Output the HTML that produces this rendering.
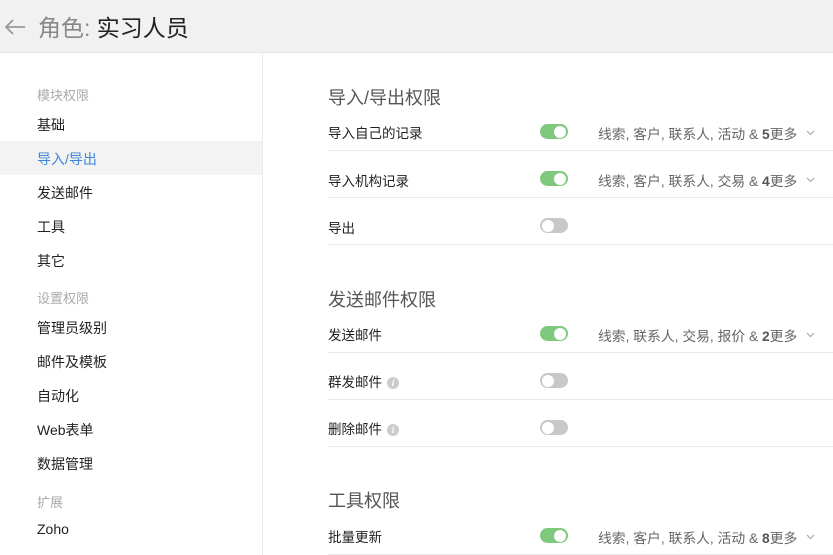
<!DOCTYPE html>
<html><head><meta charset="utf-8"><style>
*{margin:0;padding:0;box-sizing:border-box}
body{width:833px;height:555px;overflow:hidden;background:#fff;font-family:"Liberation Sans","Noto Sans CJK SC",sans-serif;color:#222;position:relative}
.hdr{position:absolute;left:0;top:0;width:833px;height:53px;background:#f1f1f1;border-bottom:1px solid #e6e6e6}
.hdr .t{position:absolute;left:38px;top:9px;font-size:23px;color:#888}
.hdr .t b{font-weight:normal;color:#222}
.side{position:absolute;left:0;top:53px;width:263px;height:502px;border-right:1px solid #ececec}
.a{position:absolute;font-size:14px;white-space:nowrap}
.lab{color:#aaa;font-size:13px}
.sel{position:absolute;left:0;top:88px;width:262px;height:34px;background:#f3f3f3}
.h{position:absolute;left:328px;font-size:18px;color:#555}
.line{position:absolute;left:328px;width:505px;height:1px;background:#e8e8e8}
.tg{position:absolute;left:540px;width:28px;height:15px;border-radius:8px;background:#c8c8c8}
.tg::after{content:"";position:absolute;top:1.5px;left:2px;width:12px;height:12px;border-radius:50%;background:#fff}
.tg.on{background:#7ec97e}
.tg.on::after{left:14px}
.dd{position:absolute;left:598px;font-size:13.8px;color:#666;white-space:nowrap}
.dd b{color:#555}
.ch{position:absolute;left:806px}
.i{display:inline-block;width:12px;height:12px;border-radius:50%;background:#ccc;color:#fff;font-size:9px;font-style:italic;font-weight:bold;text-align:center;line-height:12px;margin-left:5px;vertical-align:1px;font-family:"Liberation Serif",serif}
</style></head><body>
<div class="hdr">
<svg style="position:absolute;left:4px;top:18px" width="22" height="18" viewBox="0 0 22 18"><path d="M21 9H2M9 2L2 9L9 16" fill="none" stroke="#999" stroke-width="1.8"/></svg>
<div class="t">角色: <b>实习人员</b></div>
</div>
<div class="side">
<div class="sel"></div>
</div>
<div class="a lab" style="left:37px;top:85px">模块权限</div>
<div class="a" style="left:37px;top:115px">基础</div>
<div class="a" style="left:37px;top:149px;color:#3b86d8">导入/导出</div>
<div class="a" style="left:37px;top:183px">发送邮件</div>
<div class="a" style="left:37px;top:217px">工具</div>
<div class="a" style="left:37px;top:251px">其它</div>
<div class="a lab" style="left:37px;top:288px">设置权限</div>
<div class="a" style="left:37px;top:318px">管理员级别</div>
<div class="a" style="left:37px;top:352px">邮件及模板</div>
<div class="a" style="left:37px;top:386px">自动化</div>
<div class="a" style="left:37px;top:420px">Web表单</div>
<div class="a" style="left:37px;top:454px">数据管理</div>
<div class="a lab" style="left:37px;top:492px">扩展</div>
<div class="a" style="left:37px;top:521px">Zoho</div>

<div class="h" style="top:84px">导入/导出权限</div>
<div class="a" style="left:328px;top:122px;font-size:13.5px">导入自己的记录</div>
<div class="tg on" style="top:124px"></div>
<div class="dd" style="top:123px">线索, 客户, 联系人, 活动 &amp; <b>5</b>更多</div><svg class="ch" style="top:130px" width="9" height="6" viewBox="0 0 9 6"><path d="M1 1L4.5 4.5L8 1" fill="none" stroke="#aaa" stroke-width="1.2"/></svg>
<div class="line" style="top:150px"></div>
<div class="a" style="left:328px;top:170px;font-size:13.5px">导入机构记录</div>
<div class="tg on" style="top:171px"></div>
<div class="dd" style="top:170px">线索, 客户, 联系人, 交易 &amp; <b>4</b>更多</div><svg class="ch" style="top:177px" width="9" height="6" viewBox="0 0 9 6"><path d="M1 1L4.5 4.5L8 1" fill="none" stroke="#aaa" stroke-width="1.2"/></svg>
<div class="line" style="top:197px"></div>
<div class="a" style="left:328px;top:217px;font-size:13.5px">导出</div>
<div class="tg" style="top:218px"></div>
<div class="line" style="top:244px"></div>

<div class="h" style="top:286px">发送邮件权限</div>
<div class="a" style="left:328px;top:324px;font-size:13.5px">发送邮件</div>
<div class="tg on" style="top:326px"></div>
<div class="dd" style="top:325px">线索, 联系人, 交易, 报价 &amp; <b>2</b>更多</div><svg class="ch" style="top:332px" width="9" height="6" viewBox="0 0 9 6"><path d="M1 1L4.5 4.5L8 1" fill="none" stroke="#aaa" stroke-width="1.2"/></svg>
<div class="line" style="top:352px"></div>
<div class="a" style="left:328px;top:371px;font-size:13.5px">群发邮件<span class="i">i</span></div>
<div class="tg" style="top:373px"></div>
<div class="line" style="top:399px"></div>
<div class="a" style="left:328px;top:418px;font-size:13.5px">删除邮件<span class="i">i</span></div>
<div class="tg" style="top:420px"></div>
<div class="line" style="top:446px"></div>

<div class="h" style="top:487px">工具权限</div>
<div class="a" style="left:328px;top:526px;font-size:13.5px">批量更新</div>
<div class="tg on" style="top:528px"></div>
<div class="dd" style="top:527px">线索, 客户, 联系人, 活动 &amp; <b>8</b>更多</div><svg class="ch" style="top:534px" width="9" height="6" viewBox="0 0 9 6"><path d="M1 1L4.5 4.5L8 1" fill="none" stroke="#aaa" stroke-width="1.2"/></svg>
<div class="line" style="top:554px"></div>
</body></html>
